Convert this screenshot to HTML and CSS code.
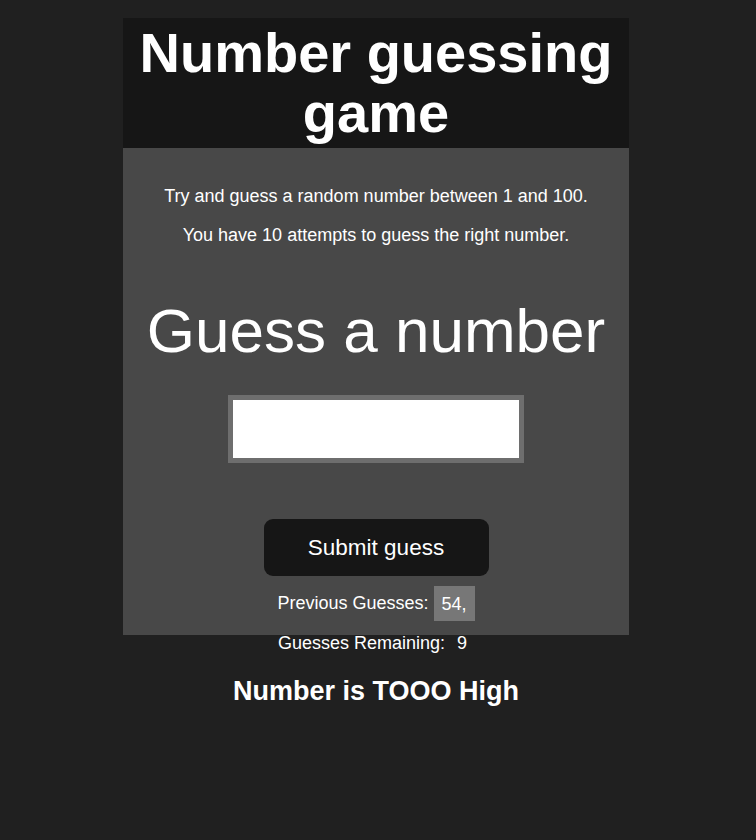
FILE: index.html
```html
<!DOCTYPE html>
<html>
<head>
<meta charset="utf-8">
<link rel="stylesheet" href="styles.css">
</head>
<body>
<div class="wrap">
  <h1 class="title">Number guessing game</h1>
  <div class="panel">
    <p class="intro">Try and guess a random number between 1 and 100.</p>
    <p class="intro">You have 10 attempts to guess the right number.</p>
    <h2 class="prompt">Guess a number</h2>
    <input class="guess" type="text">
    <button class="submit">Submit guess</button>
    <div class="row">Previous Guesses: <span class="chip">54,</span></div>
  </div>
  <div class="row remaining">Guesses Remaining: <span class="count">9</span></div>
  <h3 class="result">Number is TOOO High</h3>
</div>
</body>
</html>
```
FILE: styles.css
```css
html, body {
  margin: 0;
  padding: 0;
  background: #202020;
  color: #ffffff;
  font-family: "Liberation Sans", Arial, sans-serif;
}
.wrap {
  width: 506px;
  margin: 18px 0 0 123px;
  text-align: center;
}
.title {
  margin: 0;
  background: #161616;
  font-size: 56px;
  font-weight: bold;
  line-height: 60px;
  padding: 5px 0;
}
.panel {
  background: #484848;
  display: flex;
  flex-direction: column;
  align-items: center;
  padding-bottom: 14px;
}
.intro {
  margin: 0;
  font-size: 18px;
  line-height: 21px;
}
.intro:first-child {
  margin-top: 38px;
}
.intro + .intro {
  margin-top: 18px;
}
.prompt {
  margin: 50px 0 0;
  font-size: 62px;
  font-weight: normal;
  line-height: 70px;
}
.guess {
  margin-top: 29px;
  width: 296px;
  height: 68px;
  box-sizing: border-box;
  border: 5px solid #6e6e6e;
  background: #fff;
  outline: none;
  padding: 0;
}
.submit {
  margin-top: 56px;
  width: 225px;
  height: 57px;
  border: none;
  border-radius: 9px;
  background: #161616;
  color: #fff;
  font-family: "Liberation Sans", Arial, sans-serif;
  font-size: 22.5px;
}
.row {
  font-size: 18px;
  line-height: 35px;
  margin-top: 10px;
}
.chip {
  display: inline-block;
  background: #777777;
  padding: 1px 8px 0;
  height: 34px;
  vertical-align: top;
}
.remaining {
  margin-top: 0;
  line-height: 16px;
  padding-right: 7px;
}
.count {
  margin-left: 7px;
}
.result {
  margin: 25px 0 0;
  font-size: 27px;
  line-height: 31px;
  font-weight: bold;
}
```
